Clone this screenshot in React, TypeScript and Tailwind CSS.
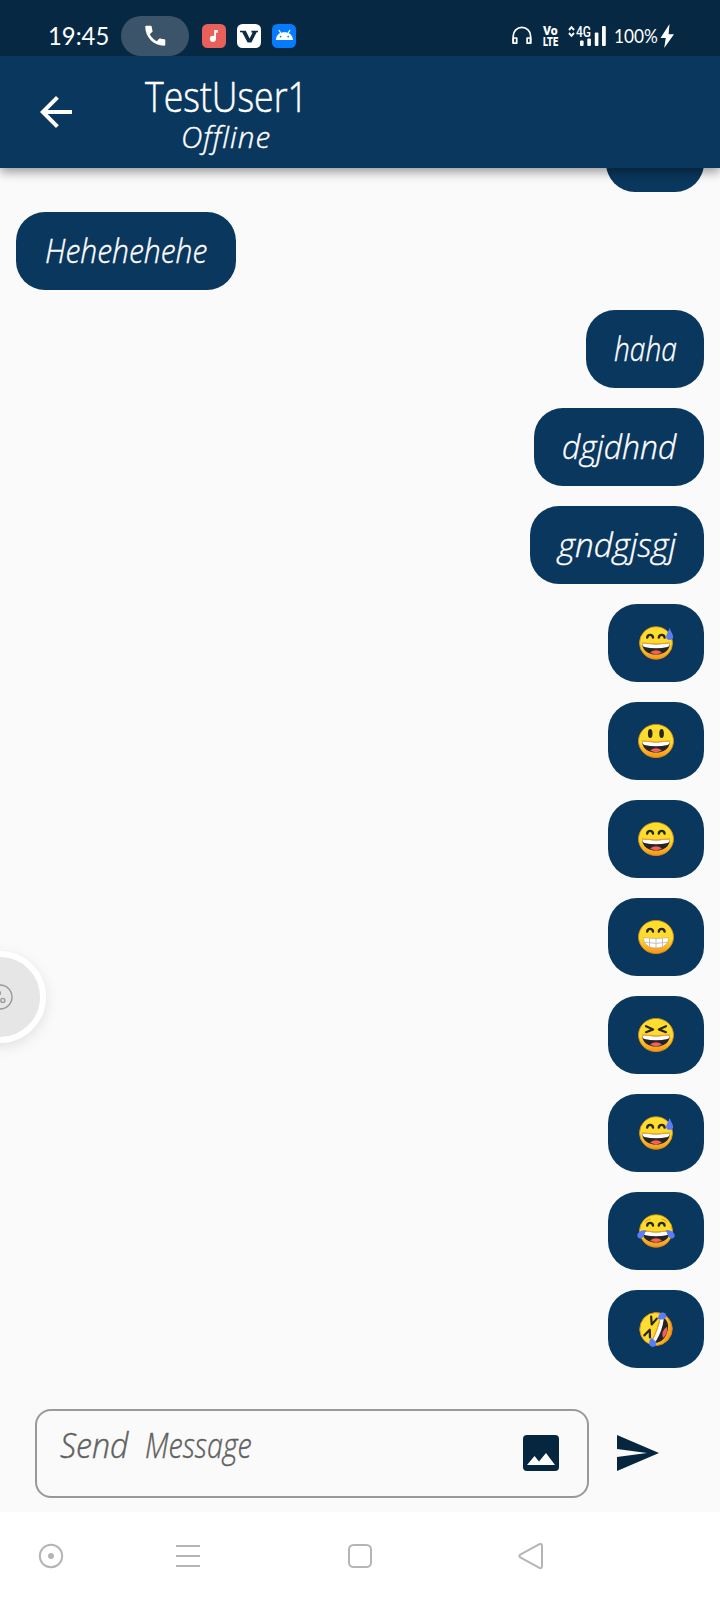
import { useLayoutEffect, useRef, useState, type ReactNode } from "react";

/* One line of text, condensed or widened to fill a given width. */
function FitText({ width, className = "", children }: { width: number; className?: string; children: string }) {
  const ref = useRef<HTMLSpanElement>(null);
  const [scale, setScale] = useState(1);
  useLayoutEffect(() => {
    const measure = () => {
      if (ref.current) setScale(width / ref.current.offsetWidth);
    };
    measure();
    document.fonts?.ready.then(measure);
  }, [width]);
  return (
    <span className="block shrink-0" style={{ width }}>
      <span
        ref={ref}
        className={`inline-block origin-left whitespace-pre ${className}`}
        style={{ transform: `scaleX(${scale})` }}
      >
        {children}
      </span>
    </span>
  );
}

const hand = "font-['Open_Sans',sans-serif] font-light italic [-webkit-text-stroke:0.4px]";

type EmojiKind = "sweat" | "smiley" | "smile" | "grin" | "squint" | "joy" | "rofl";

function OpenMouth() {
  return (
    <g>
      <path d="M6 20.3 Q20 22.5 34 20.3 C33.5 28 27.5 31.6 20 31.6 S6.5 28 6 20.3Z" fill="#242424" />
      <path d="M6 20.3 Q20 22.5 34 20.3 Q33.8 23 31.5 24 Q20 26.6 8.5 24 Q6.2 23 6 20.3Z" fill="#fff" />
      <path d="M14 29.6 Q20 25 26 29.6 Q20 33 14 29.6Z" fill="#f0605c" />
      <path d="M5.8 19.8 Q20 22 34.2 19.8" fill="none" stroke="#f29a1c" strokeWidth="1" />
    </g>
  );
}

function ArchEyes() {
  return (
    <path
      d="M11.2 14.6 C11.6 11 16.6 11 17 14.6 M22.8 14.6 C23.2 11 28.2 11 28.6 14.6"
      fill="none"
      stroke="#2b2620"
      strokeWidth="2.4"
      strokeLinecap="round"
    />
  );
}

function Emoji({ kind, label }: { kind: EmojiKind; label: string }) {
  const small = kind === "sweat" || kind === "joy" || kind === "rofl";
  return (
    <svg width="40" height="40" viewBox="0 0 40 40" role="img" aria-label={label}>
      <defs>
        <linearGradient id={`face-${kind}`} x1="0" y1="0" x2="0" y2="1">
          <stop offset="0" stopColor="#fddf31" />
          <stop offset="0.55" stopColor="#fdda30" />
          <stop offset="1" stopColor="#f7931e" />
        </linearGradient>
      </defs>
      <g transform={kind === "rofl" ? "rotate(-70 20 20)" : undefined}>
        <ellipse
          cx="20"
          cy="20"
          rx={small ? 16.5 : 17.5}
          ry={small ? 16.2 : 16.6}
          fill={`url(#face-${kind})`}
          stroke="#d98a12"
          strokeWidth="0.9"
        />
        {kind === "smiley" && (
          <g fill="#2b2620">
            <ellipse cx="14.2" cy="12.6" rx="2.3" ry="4.5" />
            <ellipse cx="25.6" cy="12.6" rx="2.3" ry="4.5" />
          </g>
        )}
        {(kind === "sweat" || kind === "smile" || kind === "grin" || kind === "joy") && <ArchEyes />}
        {(kind === "squint" || kind === "rofl") && (
          <path
            d="M10 11.2 L17.2 14.4 L10 17.2 M30 11.2 L22.8 14.4 L30 17.2"
            fill="none"
            stroke="#2b2620"
            strokeWidth="2.2"
            strokeLinejoin="round"
            strokeLinecap="round"
          />
        )}
        {kind === "grin" ? (
          <g>
            <path
              d="M7.5 20.8 Q20 22.2 32.5 20.8 C32.5 27.5 27 31 20 31 S7.5 27.5 7.5 20.8Z"
              fill="#fff"
              stroke="#c9a35a"
              strokeWidth="0.6"
            />
            <path
              d="M8.5 25.3 Q20 27.3 31.5 25.3 M13.5 21.5 V29.5 M20 21.8 V31 M26.5 21.5 V29.5"
              fill="none"
              stroke="#b9b9b9"
              strokeWidth="0.9"
            />
          </g>
        ) : (
          <OpenMouth />
        )}
        {kind === "joy" && (
          <g>
            <path d="M9.5 11 Q11 8.7 14 8.2 M30.5 11 Q29 8.7 26 8.2" fill="none" stroke="#eea01c" strokeWidth="1.3" strokeLinecap="round" />
            <path d="M10.5 19.3 C6 18.5 1.5 21 1.3 24.3 C1.2 27.8 5 28.4 7 26.2 C8.6 24.3 8.8 21.4 10.5 19.3Z" fill="#5c7cf5" />
            <path d="M29.5 19.3 C34 18.5 38.5 21 38.7 24.3 C38.8 27.8 35 28.4 33 26.2 C31.4 24.3 31.2 21.4 29.5 19.3Z" fill="#5c7cf5" />
          </g>
        )}
        {kind === "rofl" && (
          <g fill="#5c7cf5">
            <path d="M10 18.5 C5.5 16.8 1.8 19 2 22.2 C2.3 25.8 6.4 26.4 8.2 24 C9.6 22 9.6 20 10 18.5Z" />
            <path d="M30 18.5 C34.5 16.8 38.2 19 38 22.2 C37.7 25.8 33.6 26.4 31.8 24 C30.4 22 30.4 20 30 18.5Z" />
          </g>
        )}
        {kind === "sweat" && (
          <path d="M33.6 5 C34.6 8.4 37.3 11.5 37.2 14 C37.1 18 30.2 18 30.1 14 C30.1 11.5 32.7 8.4 33.6 5Z" fill="#5c7cf5" />
        )}
      </g>
    </svg>
  );
}

function Bubble({ className, children }: { className: string; children?: ReactNode }) {
  return (
    <div
      className={`flex h-[78px] shrink-0 items-center justify-center rounded-[29px] bg-[#0a375d] text-[33px] leading-[46px] text-white ${className}`}
    >
      {children}
    </div>
  );
}

const emojis: { kind: EmojiKind; label: string }[] = [
  { kind: "sweat", label: "😅" },
  { kind: "smiley", label: "😃" },
  { kind: "smile", label: "😄" },
  { kind: "grin", label: "😁" },
  { kind: "squint", label: "😆" },
  { kind: "sweat", label: "😅" },
  { kind: "joy", label: "😂" },
  { kind: "rofl", label: "🤣" },
];

function StatusBar() {
  return (
    <div className="flex h-14 items-end bg-[#072843] pl-[48px] text-white">
      <div className="flex h-10 w-[73px] items-center">
        <FitText width={61} className="-mt-[2px] font-['Lato','Roboto',sans-serif] text-[25px] leading-10">19:45</FitText>
      </div>
      <div className="flex h-10 w-[68px] items-center justify-center rounded-full bg-[#3b546a]">
        <svg width="26" height="26" viewBox="0 0 24 24" fill="#fff">
          <path d="M3 3.5 C3 2.8 3.5 2.5 4.2 2.5 H8 C8.6 2.5 8.9 2.9 9 3.5 C9.1 4.8 9.3 6 9.7 7.1 C9.9 7.6 9.8 8 9.4 8.4 L7.2 10.4 C8.7 13.2 10.9 15.4 13.7 16.8 L15.8 14.6 C16.1 14.3 16.6 14.2 17 14.3 C18.1 14.7 19.3 14.9 20.6 15 C21.1 15 21.5 15.4 21.5 16 V19.9 C21.5 20.5 21.1 21 20.5 21 C10.8 21 3 13.2 3 3.5Z" />
        </svg>
      </div>
      <div className="ml-[13px] flex h-10 items-center gap-[11px]">
        <svg width="24" height="24" viewBox="0 0 24 24">
          <rect width="24" height="24" rx="5.5" fill="#e9605a" />
          <circle cx="10.9" cy="14.8" r="3.1" fill="#fff" />
          <path d="M12.2 6 H15.8 V8.8 H14 V15 H12.2Z" fill="#fff" />
        </svg>
        <svg width="24" height="24" viewBox="0 0 24 24">
          <rect width="24" height="24" rx="5.5" fill="#fff" />
          <path d="M3 6.8 H8.8 L12.6 14.6 L15.6 8.4 H14.4 V6.8 H21 V8.2 H19.6 L14.4 18.6 H10.6 L5.2 8.2 H3Z" fill="#0c2c45" />
        </svg>
        <svg width="24" height="24" viewBox="0 0 24 24">
          <rect width="24" height="24" rx="5.5" fill="#057cff" />
          <path d="M3.8 16 C4.3 10.6 8 8.2 12.4 8.2 S20.5 10.6 21 16Z" fill="#fff" />
          <path d="M6.8 6 L9 9.5 M18 6 L15.8 9.5" stroke="#fff" strokeWidth="1.2" />
          <circle cx="8.6" cy="12.6" r="0.9" fill="#057cff" />
          <circle cx="16.2" cy="12.6" r="0.9" fill="#057cff" />
        </svg>
      </div>
      <div className="ml-auto flex h-10 items-center pr-[45px]">
        <svg width="20" height="20" viewBox="0 0 20 20" fill="none" stroke="#fff" strokeWidth="1.7">
          <path d="M1.2 17.2 V10 A8.6 8.6 0 0 1 18.6 10 V17.2" />
          <path d="M1.2 12 H4.7 V17.2 H1.2Z M15.1 12 H18.6 V17.2 H15.1Z" strokeLinejoin="round" />
        </svg>
        <div className="ml-[11px] flex w-4 flex-col items-start font-['Roboto',sans-serif] text-[13px] leading-[11px] font-black">
          <FitText width={15}>Vo</FitText>
          <FitText width={15}>LTE</FitText>
        </div>
        <svg className="ml-[9px]" width="40" height="22" viewBox="0 0 40 22" fill="#fff">
          <path d="M1 5 L3.5 2.2 L6 5 M1 8 L3.5 10.8 L6 8" fill="none" stroke="#fff" strokeWidth="1.9" />
          <text x="8" y="12.2" fontSize="14" fontFamily="Roboto" fontWeight="500" textLength="15" lengthAdjust="spacingAndGlyphs">4G</text>
          <rect x="12" y="15.5" width="3.6" height="5.5" rx="1" />
          <rect x="19.3" y="13.5" width="3.6" height="7.5" rx="1" />
          <rect x="26.8" y="7.5" width="3.6" height="13.5" rx="1" />
          <rect x="34" y="1" width="3.8" height="20" rx="1" />
        </svg>
        <div className="-mt-[3px] ml-[6px]">
          <FitText width={44} className="font-['Lato','Roboto',sans-serif] text-[20px] leading-10">100%</FitText>
        </div>
        <svg className="ml-[2px]" width="15" height="24" viewBox="0 0 15 24" fill="#fff">
          <path d="M9.5 0 L0.5 14 H5.8 L4.2 24 L14 10.2 H8.6Z" />
        </svg>
      </div>
    </div>
  );
}

export default function App() {
  return (
    <div className="relative flex h-[1600px] w-[720px] flex-col overflow-hidden bg-[#fafafa]">
      <header className="relative z-10 h-[168px] shrink-0 shadow-[0_4px_10px_0px_rgba(0,0,0,0.4)]">
        <StatusBar />
        <div className="flex h-28 items-start bg-[#0a375d] text-white">
          <svg className="mt-10 ml-10 shrink-0" width="32" height="32" viewBox="4 4 16 16" fill="#fff">
            <path d="M20 11H7.83l5.59-5.59L12 4l-8 8 8 8 1.41-1.41L7.83 13H20v-2z" />
          </svg>
          <div className="ml-[73px] flex w-[163px] flex-col items-center">
            <FitText width={163} className="mt-[16px] font-['Open_Sans',sans-serif] text-[42px] leading-[48px] font-light [-webkit-text-stroke:0.5px]">TestUser1</FitText>
            <div className="mt-px -ml-[2px]">
              <FitText width={90} className={`${hand} text-[29px] leading-8 tracking-[1px]`}>Offline</FitText>
            </div>
          </div>
        </div>
      </header>

      <main className="flex min-h-0 flex-1 flex-col justify-end gap-5 overflow-hidden px-4">
        <Bubble className="w-[98px] self-end" />
        <Bubble className="w-[220px] self-start">
          <FitText width={162} className={hand}>Hehehehehe</FitText>
        </Bubble>
        <Bubble className="w-[118px] self-end">
          <FitText width={63} className={hand}>haha</FitText>
        </Bubble>
        <Bubble className="w-[170px] self-end">
          <FitText width={114} className={hand}>dgjdhnd</FitText>
        </Bubble>
        <Bubble className="w-[174px] self-end">
          <FitText width={118} className={hand}>gndgjsgj</FitText>
        </Bubble>
        {emojis.map((e, i) => (
          <Bubble key={i} className="w-24 self-end">
            <Emoji kind={e.kind} label={e.label} />
          </Bubble>
        ))}
      </main>

      <div className="flex h-[144px] shrink-0 items-start pt-[41px] pl-[35px]">
        <div className="flex h-[89px] w-[554px] items-start justify-between rounded-2xl border-2 border-[#999999] pr-[28px] pl-[23px]">
          <div className="mt-[12px] flex gap-[17px] text-[#606060]">
            <FitText width={68} className={`${hand} text-[34px] leading-[44px]`}>Send</FitText>
            <FitText width={107} className={`${hand} text-[34px] leading-[44px]`}>Message</FitText>
          </div>
          <svg className="mt-[24px]" width="36" height="36" viewBox="0 0 36 36">
            <rect width="36" height="36" rx="4" fill="#06263f" />
            <path d="M4 30 L11.5 21 L16 26.5 L23 18 L32 30Z" fill="#fff" />
          </svg>
        </div>
        <svg className="mt-[26px] ml-[28px]" width="42" height="36" viewBox="0 0 42 36">
          <path d="M0 0 L42 18 L0 36 V22 L30 18 L0 14Z" fill="#06263f" />
        </svg>
      </div>

      <nav className="flex h-[88px] shrink-0 items-center bg-white pl-[38px]">
        <svg width="26" height="26" viewBox="0 0 26 26" fill="none" stroke="#b5b5b5" strokeWidth="2">
          <circle cx="13" cy="13" r="11.2" />
          <circle cx="13" cy="13" r="3" fill="#b5b5b5" stroke="none" />
        </svg>
        <svg className="ml-[112px]" width="24" height="26" viewBox="0 0 24 26" stroke="#b5b5b5" strokeWidth="2">
          <path d="M0 3 H24 M0 13 H24 M0 23 H24" />
        </svg>
        <svg className="ml-[147px]" width="26" height="26" viewBox="0 0 26 26" fill="none" stroke="#b5b5b5" strokeWidth="2">
          <rect x="2" y="2" width="22" height="22" rx="4.5" />
        </svg>
        <svg className="ml-[145px]" width="26" height="28" viewBox="0 0 26 28" fill="none" stroke="#b5b5b5" strokeWidth="2" strokeLinejoin="round">
          <path d="M2.2 12.6 L21 2.3 Q24 1.2 24 4 V24 Q24 26.8 21 25.7 L2.2 15.4 Q0.6 14 2.2 12.6Z" />
        </svg>
      </nav>

      <div className="absolute top-[951px] -left-[46px] flex h-[92px] w-[92px] items-center justify-center rounded-full border-[6px] border-white bg-[#e6e6e6] shadow-[0_4px_14px_rgba(0,0,0,0.1)]">
        <svg width="26" height="26" viewBox="0 0 26 26" fill="none" stroke="#999999" strokeWidth="1.4">
          <circle cx="13" cy="13" r="12" />
          <circle cx="15.8" cy="16.4" r="2" />
          <circle cx="11.4" cy="9" r="2" />
          <path d="M9 14 L13 17" />
        </svg>
      </div>
    </div>
  );
}
